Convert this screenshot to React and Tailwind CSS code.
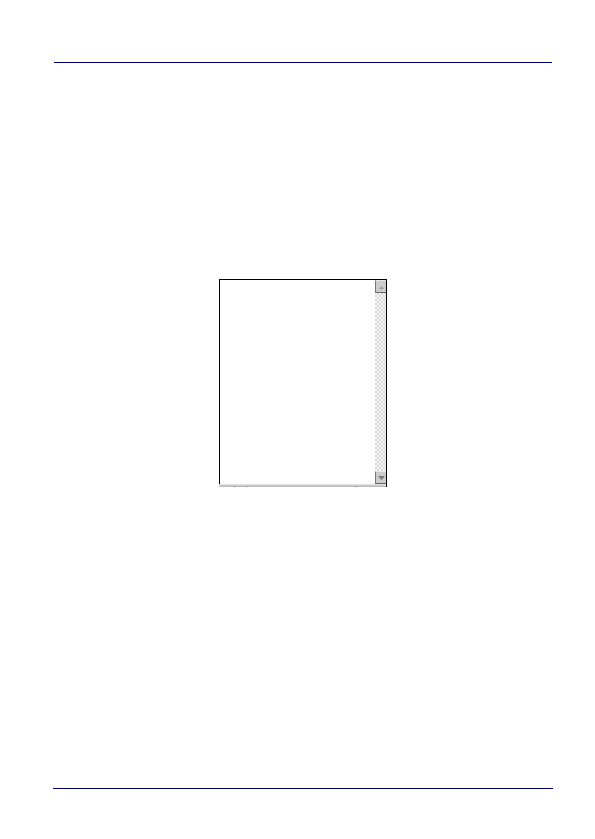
function ScrollButton({ direction }) {
  return (
    <button
      type="button"
      aria-label={direction === "up" ? "Scroll up" : "Scroll down"}
      className="flex h-[13px] w-full shrink-0 items-center justify-end border-t border-b border-l border-t-[#e4e4e4] border-b-[#666666] border-l-[#777777] bg-[#cccccc] pr-px"
    >
      <svg width="7" height="4" viewBox="0 0 7 4" aria-hidden="true">
        <path
          d={direction === "up" ? "M1 4L3.5 1L6 4Z" : "M0 0L3.5 4L7 0Z"}
          fill={direction === "up" ? "#999999" : "#777777"}
        />
      </svg>
    </button>
  );
}

function ListWindow() {
  return (
    <section aria-label="List" className="flex h-[208px] w-[168px] flex-col border-t border-r border-black">
      <div className="flex min-h-0 flex-1 border-l border-black">
        <div className="flex-1 bg-white" />
        <div className="flex w-[11px] flex-col bg-white">
          <ScrollButton direction="up" />
          <div className="flex-1 bg-[conic-gradient(#d6d6d6_25%,#f8f8f8_0_50%,#d6d6d6_0_75%,#f8f8f8_0)] bg-[length:4px_4px]" />
          <ScrollButton direction="down" />
        </div>
      </div>
      <div className="flex h-[3px] shrink-0 items-end justify-between border-t border-t-[#e0e0e0] bg-linear-to-b from-[#d2d2d2] to-[#b5b5b5] pr-[29px] pl-[15px]">
        <div className="flex gap-[11px]">
          <span className="h-px w-px bg-[#777777]" />
          <span className="h-px w-px bg-[#777777]" />
        </div>
        <span className="h-px w-px bg-[#777777]" />
      </div>
    </section>
  );
}

export default function App() {
  return (
    <div className="flex min-h-screen flex-col bg-white pt-[62px] pr-[42px] pb-[50px] pl-[53px]">
      <header className="mx-px h-px bg-[#000066]" />
      <main className="flex flex-1 flex-col items-center pt-[216px]">
        <ListWindow />
      </main>
      <footer className="h-px bg-[#000066]" />
    </div>
  );
}
